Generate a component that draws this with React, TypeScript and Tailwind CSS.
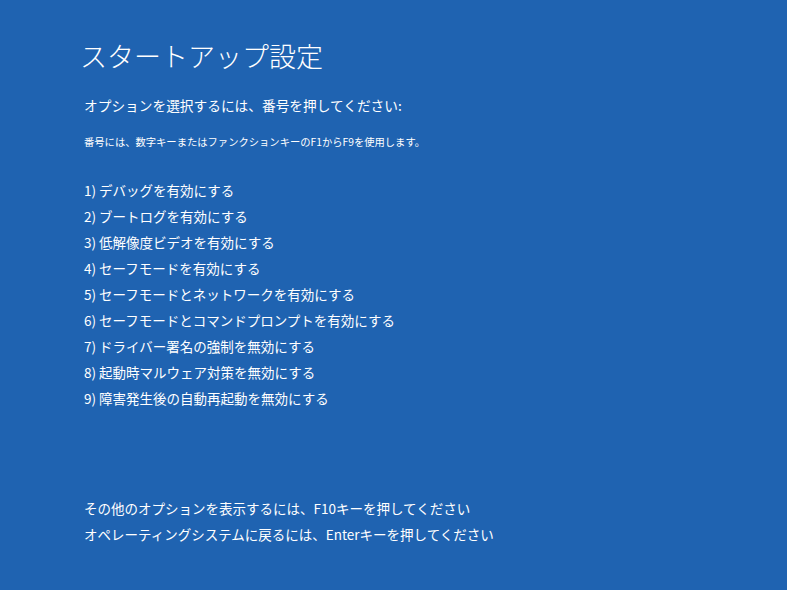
const options = [
  '1) デバッグを有効にする',
  '2) ブートログを有効にする',
  '3) 低解像度ビデオを有効にする',
  '4) セーフモードを有効にする',
  '5) セーフモードとネットワークを有効にする',
  '6) セーフモードとコマンドプロンプトを有効にする',
  '7) ドライバー署名の強制を無効にする',
  '8) 起動時マルウェア対策を無効にする',
  '9) 障害発生後の自動再起動を無効にする',
];

export default function App() {
  return (
    <div
      className="w-[787px] h-[590px] bg-[#1f63b1] text-white overflow-hidden pl-[84px] pt-[36px]"
      style={{ fontFamily: '"Noto Sans CJK JP", "Noto Sans", sans-serif' }}
    >
      <h1 className="-ml-[4px] text-[27px] leading-[40px] font-light">スタートアップ設定</h1>
      <p className="mt-[17px] text-[13.7px] leading-[24px]">オプションを選択するには、番号を押してください:</p>
      <p className="mt-[17px] text-[10.3px] leading-[16px]">
        番号には、数字キーまたはファンクションキーのF1からF9を使用します。
      </p>
      <ul className="mt-[27px] flex flex-col">
        {options.map((o) => (
          <li key={o} className="text-[13.5px] leading-[26px]">
            {o}
          </li>
        ))}
      </ul>
      <div className="mt-[84px] flex flex-col">
        <p className="text-[13.5px] leading-[26px]">その他のオプションを表示するには、F10キーを押してください</p>
        <p className="text-[13.5px] leading-[26px]">オペレーティングシステムに戻るには、Enterキーを押してください</p>
      </div>
    </div>
  );
}
